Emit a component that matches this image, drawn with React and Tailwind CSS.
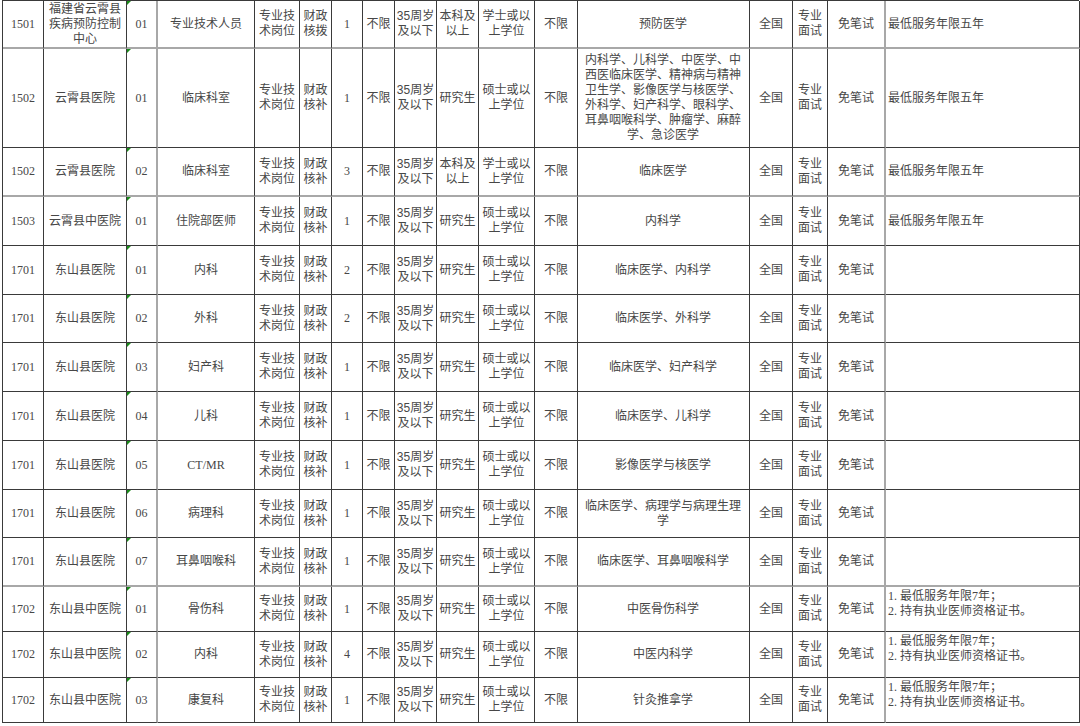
const widths = [
  "w-[41px]",
  "w-[83px]",
  "w-[31px]",
  "w-[97px]",
  "w-[45px]",
  "w-[32px]",
  "w-[31px]",
  "w-[32px]",
  "w-[42px]",
  "w-[42px]",
  "w-[56px]",
  "w-[43px]",
  "w-[172px]",
  "w-[43px]",
  "w-[35px]",
  "w-[58px]",
  "w-[194px]",
];

const LONG = (
  <>
    内科学、儿科学、中医学、中
    <br />
    西医临床医学、精神病与精神
    <br />
    卫生学、影像医学与核医学、
    <br />
    外科学、妇产科学、眼科学、
    <br />
    耳鼻咽喉科学、肿瘤学、麻醉
    <br />
    学、急诊医学
  </>
);

const NOTE7 = (
  <>
    1. 最低服务年限7年；
    <br />
    2. 持有执业医师资格证书。
  </>
);

const base = ["专业技术岗位", "财政核补", "不限", "35周岁及以下", "研究生", "硕士或以上学位", "不限"];

const rows = [
  { h: "h-[48px]", gray: true, cells: ["1501", "福建省云霄县疾病预防控制中心", "01", "专业技术人员", "专业技术岗位", "财政核拨", "1", "不限", "35周岁及以下", "本科及以上", "学士或以上学位", "不限", "预防医学", "全国", "专业面试", "免笔试", "最低服务年限五年"] },
  { h: "h-[99px]", cells: ["1502", "云霄县医院", "01", "临床科室", "专业技术岗位", "财政核补", "1", "不限", "35周岁及以下", "研究生", "硕士或以上学位", "不限", LONG, "全国", "专业面试", "免笔试", "最低服务年限五年"] },
  { h: "h-[49px]", gray: true, cells: ["1502", "云霄县医院", "02", "临床科室", "专业技术岗位", "财政核补", "3", "不限", "35周岁及以下", "本科及以上", "学士或以上学位", "不限", "临床医学", "全国", "专业面试", "免笔试", "最低服务年限五年"] },
  { h: "h-[49px]", cells: ["1503", "云霄县中医院", "01", "住院部医师", ...base.slice(0, 2), "1", ...base.slice(2), "内科学", "全国", "专业面试", "免笔试", "最低服务年限五年"] },
  { h: "h-[49px]", cells: ["1701", "东山县医院", "01", "内科", ...base.slice(0, 2), "2", ...base.slice(2), "临床医学、内科学", "全国", "专业面试", "免笔试", ""] },
  { h: "h-[48px]", cells: ["1701", "东山县医院", "02", "外科", ...base.slice(0, 2), "2", ...base.slice(2), "临床医学、外科学", "全国", "专业面试", "免笔试", ""] },
  { h: "h-[49px]", cells: ["1701", "东山县医院", "03", "妇产科", ...base.slice(0, 2), "1", ...base.slice(2), "临床医学、妇产科学", "全国", "专业面试", "免笔试", ""] },
  { h: "h-[49px]", cells: ["1701", "东山县医院", "04", "儿科", ...base.slice(0, 2), "1", ...base.slice(2), "临床医学、儿科学", "全国", "专业面试", "免笔试", ""] },
  { h: "h-[49px]", cells: ["1701", "东山县医院", "05", "CT/MR", ...base.slice(0, 2), "1", ...base.slice(2), "影像医学与核医学", "全国", "专业面试", "免笔试", ""] },
  { h: "h-[48px]", cells: ["1701", "东山县医院", "06", "病理科", ...base.slice(0, 2), "1", ...base.slice(2), <>临床医学、病理学与病理生理<br />学</>, "全国", "专业面试", "免笔试", ""] },
  { h: "h-[49px]", gray: true, cells: ["1701", "东山县医院", "07", "耳鼻咽喉科", ...base.slice(0, 2), "1", ...base.slice(2), "临床医学、耳鼻咽喉科学", "全国", "专业面试", "免笔试", ""] },
  { h: "h-[45px]", top: true, cells: ["1702", "东山县中医院", "01", "骨伤科", ...base.slice(0, 2), "1", ...base.slice(2), "中医骨伤科学", "全国", "专业面试", "免笔试", NOTE7] },
  { h: "h-[46px]", top: true, cells: ["1702", "东山县中医院", "02", "内科", ...base.slice(0, 2), "4", ...base.slice(2), "中医内科学", "全国", "专业面试", "免笔试", NOTE7] },
  { h: "h-[45px]", top: true, cells: ["1702", "东山县中医院", "03", "康复科", ...base.slice(0, 2), "1", ...base.slice(2), "针灸推拿学", "全国", "专业面试", "免笔试", NOTE7] },
];

const pad = (i) => {
  if (i === 12) return "pl-[6px] pr-[7px]";
  if (i === 8) return "px-[1px] font-['Liberation_Sans','Noto_Sans_CJK_SC',sans-serif]";
  return "px-[2px]";
};

const Row = ({ row }) => (
  <div className={`flex ${row.h}`}>
    {row.cells.map((cell, i) => {
      const grayRight = i === 2 || i === 15;
      const last = i === 16;
      return (
        <div
          key={i}
          className={`relative shrink-0 flex ${widths[i]} ${
            row.gray ? "border-b-2 border-b-[#a8a8a8]" : "border-b border-b-[#3a3a3a]"
          } ${grayRight ? "border-r-2 border-r-[#a8a8a8]" : "border-r border-r-[#3a3a3a]"} ${
            last
              ? `justify-start text-left pl-[2px] ${row.top ? "items-start pt-[2px]" : "items-center"}`
              : `items-center justify-center text-center ${pad(i)}`
          }`}
        >
          {i === 2 && (
            <span className="absolute top-0 left-0 w-0 h-0 border-t-[4px] border-t-[#1a8c1a] border-r-[4px] border-r-transparent" />
          )}
          <span>{cell}</span>
        </div>
      );
    })}
  </div>
);

export default function App() {
  return (
    <div className="bg-white w-[1080px] h-[726px] overflow-hidden">
      <div className="ml-[2px] w-[1077px] border-l border-t border-[#3a3a3a] text-[12px] leading-[15px] text-[#474747] font-['Liberation_Serif','Noto_Sans_CJK_SC',serif]">
        {rows.map((row, idx) => (
          <Row key={idx} row={row} />
        ))}
      </div>
    </div>
  );
}
